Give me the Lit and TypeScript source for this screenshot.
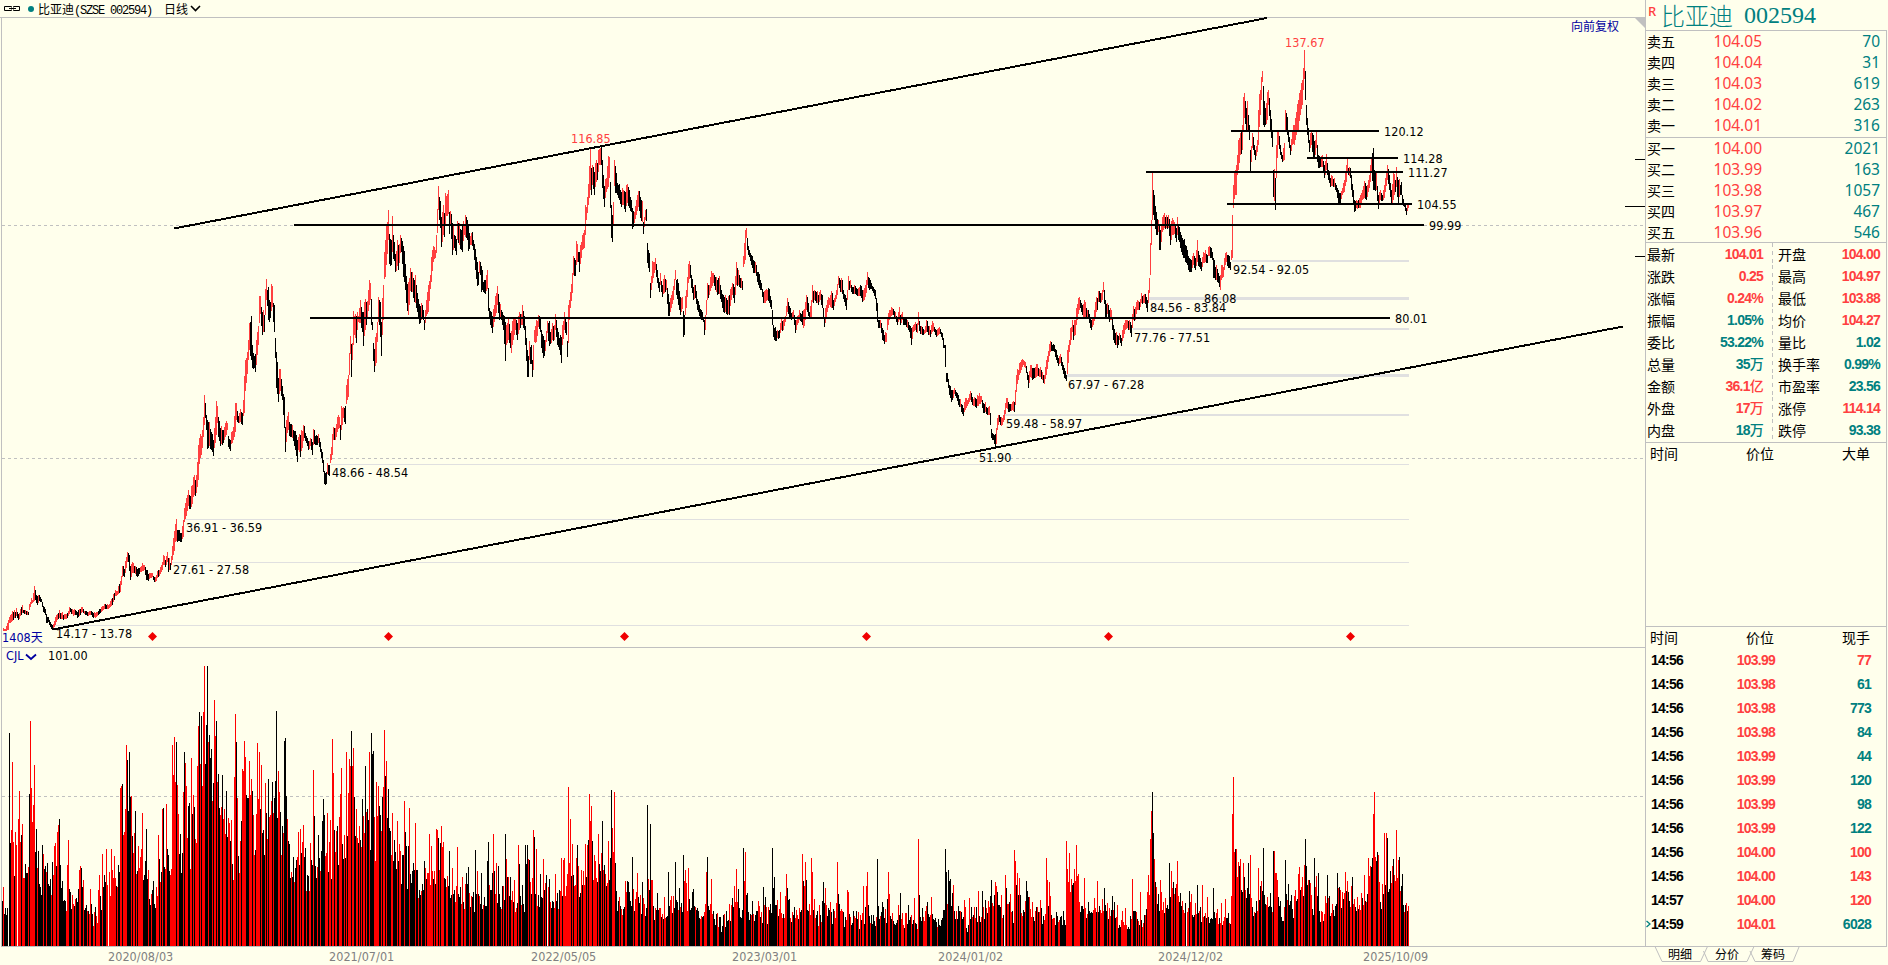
import { LitElement, html, css, svg } from 'lit'
import { customElement, property } from 'lit/decorators.js'

// x, high, low of the price bars (pixels); bars in between are interpolated
const PRICE = `
3 628 631 5 629 631 8 620 630 9 617 623 12 611 621 15 612 618 16 608 616 18 614 620 20 609 616 22 605 613 23 610 613 26 611 615
28 612 615 29 604 610 31 598 604 32 600 603 34 586 601 35 590 600 37 596 605 39 595 601 41 599 602 43 606 612 45 609 615 46 614 623
48 617 622 50 622 627 52 625 630 53 624 629 55 617 625 57 614 620 59 610 618 61 613 619 65 614 619 67 613 618 69 607 614 70 608 612
73 610 616 76 611 615 77 612 618 80 609 615 82 607 612 85 611 615 88 612 616 91 611 615 93 613 618 96 612 617 99 609 614 102 606 611
104 604 609 106 605 609 109 604 608 111 599 606 113 594 602 115 590 596 117 591 595 118 586 594 120 581 592 121 576 585 122 566 577
124 569 577 125 561 573 127 552 562 128 553 562 129 555 571 130 566 580 132 562 573 134 566 573 136 567 576 138 568 576 140 567 572
142 563 571 144 565 570 146 570 580 148 574 581 150 573 578 152 573 577 154 577 582 156 575 581 158 570 577 160 567 574 162 562 570
163 555 565 165 560 567 167 552 562 168 558 572 170 563 570 171 556 565 172 546 560 174 531 551 175 524 542 176 519 541 177 530 542
179 530 541 181 533 542 183 520 537 184 508 522 186 498 516 188 490 506 190 496 509 191 486 507 193 477 497 195 480 496 196 475 493
198 445 480 199 438 464 201 436 455 203 417 437 204 395 425 205 403 418 206 415 430 207 420 449 209 422 446 211 432 450 213 440 456
214 428 448 216 401 435 217 406 423 218 417 437 220 428 446 222 430 445 224 427 440 226 421 435 227 423 430 228 436 447 230 440 451
231 432 444 233 427 440 235 403 432 236 403 420 238 416 423 240 409 422 242 413 425 243 400 416 244 376 413 245 360 391 247 352 374
248 340 360 249 323 350 251 316 360 252 345 368 254 356 368 255 354 372 256 340 365 258 326 345 259 296 323 260 296 314 262 312 335
264 315 332 265 289 315 266 279 300 267 290 306 268 287 320 270 302 318 271 284 311 272 286 307 273 303 322 274 305 332 275 338 358
276 352 388 278 378 402 280 369 391 282 386 400 283 394 415 284 397 428 285 427 452 287 416 433 288 412 430 289 422 436 291 424 437
293 430 441 295 431 450 297 440 462 298 437 450 300 435 457 302 431 448 304 426 438 306 436 443 308 441 450 310 438 446 312 442 455
313 429 445 315 436 445 317 436 445 318 434 443 320 442 452 322 452 463 323 460 472 324 471 484 326 472 484 327 463 474 329 465 476
330 454 463 331 447 460 332 434 455 333 427 440 335 428 440 337 417 432 339 417 428 340 425 440 341 406 430 343 407 418 345 406 424
346 385 404 348 375 397 349 353 375 350 336 354 351 344 377 352 343 360 353 311 345 354 316 335 356 316 343 357 312 330 358 316 322
360 300 323 362 312 332 363 312 346 365 299 330 367 301 318 369 280 305 370 283 300 371 299 325 372 322 330 373 343 361 374 349 372
376 333 363 377 322 342 378 297 322 379 300 325 380 302 337 381 322 356 383 285 320 384 252 279 385 240 277 386 226 265 388 210 240
389 234 264 391 240 265 392 216 252 394 242 261 395 254 272 397 240 266 398 245 270 400 235 253 401 238 252 403 246 277 405 264 290
406 276 303 408 282 315 410 268 291 412 272 292 414 280 302 415 275 303 417 293 312 419 304 324 421 303 320 423 310 320 424 320 330
426 300 316 428 285 312 430 275 289 431 257 282 433 246 262 435 250 258 436 235 253 437 209 233 438 186 210 439 197 220 440 201 228
441 217 247 443 205 235 444 213 237 445 193 226 446 196 216 448 190 214 449 212 234 450 211 225 452 223 255 454 235 248 456 239 255
457 221 240 459 223 245 461 230 250 462 226 252 464 224 235 465 215 237 467 220 240 468 225 251 470 236 245 472 232 246 473 240 250
475 249 270 477 262 286 478 272 285 479 261 273 480 262 275 481 266 292 483 282 292 485 280 294 487 270 289 488 288 311 489 308 318
490 311 325 492 316 333 494 305 322 496 293 313 497 286 305 499 302 320 501 310 320 503 315 330 505 322 361 506 325 345 508 318 340
510 333 348 511 331 353 513 318 340 515 319 330 517 323 340 519 312 330 521 314 325 522 305 325 524 316 330 525 326 345 527 350 377
528 356 377 529 341 360 531 345 364 532 360 377 533 345 370 534 330 342 536 320 342 538 315 327 540 318 332 541 330 348 543 336 358
545 340 351 547 321 333 549 321 346 550 332 344 552 323 340 554 325 340 555 314 330 557 328 345 559 338 350 561 337 363 562 325 345
564 312 330 566 322 335 567 341 357 568 305 343 569 300 320 570 292 308 572 273 293 573 256 275 575 260 276 576 241 265 578 252 262
579 252 272 581 242 258 582 235 250 584 230 248 585 205 235 586 207 220 588 184 205 590 147 190 591 168 195 592 165 185 594 172 195
595 163 187 597 163 180 598 150 172 599 149 165 601 146 165 602 160 188 604 186 207 606 178 192 608 156 187 609 157 178 610 182 208
611 205 238 612 215 242 613 202 225 614 160 186 615 166 193 617 183 195 619 184 200 621 192 207 623 190 205 625 192 212 627 184 203
629 190 208 631 200 212 632 208 229 634 212 223 636 200 215 638 191 207 640 197 218 642 201 222 643 222 234 645 210 220 646 209 221
647 243 263 649 253 272 650 283 298 651 276 290 652 261 283 654 262 273 655 258 270 657 270 283 659 282 292 660 273 285 662 285 297
664 275 293 666 280 290 668 294 316 669 302 316 671 295 308 673 286 300 675 270 280 676 280 295 678 283 305 680 297 315 682 297 309
683 311 337 684 315 335 685 296 315 687 277 297 688 264 283 690 265 278 691 275 288 693 287 300 695 285 298 697 299 310 699 305 316
701 310 320 703 318 322 704 320 335 705 315 330 706 300 315 707 283 300 709 285 295 711 271 288 713 273 283 715 277 290 717 280 295
719 276 294 721 290 302 723 295 312 725 295 312 727 300 315 729 295 315 731 287 300 732 283 295 734 287 303 736 262 285 738 270 285
740 278 288 742 281 290 743 256 267 745 230 260 746 228 238 747 238 250 749 250 257 751 255 265 753 260 273 755 262 273 757 272 282
759 274 288 761 283 290 763 292 303 765 290 303 767 290 300 769 289 303 771 300 309 772 310 325 773 325 337 775 327 341 777 330 338
779 330 338 781 319 330 783 320 330 785 316 322 787 298 312 789 306 317 791 313 320 793 310 318 795 320 333 797 316 325 799 310 320
801 314 322 803 310 328 805 302 320 806 295 310 808 303 316 809 312 317 811 300 317 812 285 302 814 290 300 816 292 303 818 295 305
820 290 300 822 295 308 824 317 327 825 308 323 827 300 312 829 298 305 831 291 308 833 300 310 835 295 302 837 284 295 838 276 285
840 280 292 842 280 294 844 294 302 846 298 310 847 290 300 848 276 290 850 280 288 852 287 294 854 285 294 856 288 295 858 288 296
860 285 296 862 290 302 864 288 300 866 280 293 867 272 285 869 278 290 871 283 289 873 287 293 875 290 299 877 303 322 878 320 328
880 320 328 882 328 340 884 335 344 886 333 342 887 318 330 889 310 320 891 307 316 893 309 315 895 312 318 897 317 325 899 307 320
900 315 325 902 312 320 903 318 325 905 318 325 907 320 328 909 325 332 911 328 345 913 325 332 915 322 330 917 323 333 918 312 325
920 326 334 922 327 335 924 330 334 926 320 332 928 326 335 930 330 337 932 321 332 934 327 332 936 330 337 938 328 335 940 329 334
942 333 340 943 338 348 944 345 348 945 345 367 946 373 382 947 373 382 949 385 395 951 390 402 953 390 398 954 388 394 956 392 398
958 395 405 960 399 407 961 404 412 963 408 416 965 398 410 967 400 406 970 391 400 972 397 405 974 397 406 976 399 408 979 393 404
981 396 402 983 403 413 985 402 412 987 408 415 989 406 415 990 413 425 991 429 438 993 434 440 995 434 447 996 428 444 997 418 430
999 415 422 1001 417 426 1003 415 422 1004 410 420 1006 398 408 1008 402 412 1010 404 411 1012 402 410 1014 402 412 1015 390 405
1016 375 392 1018 370 380 1019 363 375 1021 360 370 1023 360 365 1025 362 368 1027 372 380 1028 375 388 1030 365 377 1032 368 380
1034 368 378 1036 364 377 1038 368 376 1040 367 377 1042 372 380 1044 375 384 1046 360 375 1048 351 362 1050 341 352 1052 345 351
1054 345 352 1056 350 360 1058 358 366 1060 354 363 1062 362 370 1064 368 378 1066 375 381 1067 350 374 1069 340 352 1070 328 345
1072 320 332 1073 325 340 1075 320 335 1076 308 325 1078 298 314 1080 300 308 1082 305 315 1084 300 318 1086 308 318 1088 310 318
1090 318 328 1091 320 330 1093 318 325 1095 302 317 1097 298 310 1098 291 302 1100 293 303 1102 290 300 1103 282 292 1105 300 317
1107 303 314 1109 310 322 1111 310 320 1113 325 340 1115 333 345 1117 335 348 1119 333 340 1121 338 346 1123 325 338 1125 320 330
1127 320 328 1129 320 330 1131 325 337 1133 306 320 1135 307 320 1137 300 310 1139 302 310 1141 293 303 1143 295 303 1145 294 304
1147 300 312 1149 278 293 1150 243 275 1151 220 245 1152 172 220 1153 190 215 1154 195 220 1156 212 235 1158 220 232 1159 225 250
1160 230 250 1162 217 232 1164 213 228 1166 215 228 1168 215 228 1170 225 245 1172 218 235 1174 222 234 1176 228 242 1177 217 235
1179 227 242 1181 235 252 1183 240 258 1185 245 262 1187 250 265 1189 258 272 1191 260 272 1193 253 265 1195 258 270 1197 240 262
1199 255 267 1201 262 271 1203 252 263 1205 250 262 1207 255 263 1208 247 256 1210 247 258 1212 252 260 1213 258 278 1215 267 280
1216 265 280 1218 273 283 1220 275 290 1221 265 280 1223 267 277 1224 258 270 1226 252 262 1228 255 268 1230 262 270 1231 250 260
1232 215 258 1233 185 208 1235 170 195 1236 165 195 1237 155 175 1238 140 170 1239 138 163 1240 133 155 1242 125 150 1243 97 130
1244 93 118 1246 108 130 1247 101 130 1248 115 130 1249 125 140 1250 150 172 1252 133 148 1254 145 155 1255 150 160 1257 140 152
1258 110 145 1260 90 115 1261 77 100 1262 71 82 1263 86 125 1265 108 125 1267 92 120 1268 90 105 1270 110 130 1272 130 147
1273 170 197 1275 178 210 1276 145 178 1278 132 145 1280 145 155 1282 155 162 1284 143 160 1285 110 130 1287 117 135 1288 130 142
1290 145 155 1292 130 145 1294 125 145 1296 112 135 1298 100 130 1300 90 115 1302 80 105 1303 68 90 1304 50 79 1305 71 100
1306 105 125 1307 118 135 1309 140 152 1311 130 145 1313 135 158 1315 140 155 1316 130 148 1317 145 162 1318 155 168 1320 157 167
1322 155 167 1324 165 178 1326 154 170 1328 170 180 1330 178 187 1332 176 186 1334 178 187 1336 185 192 1338 190 203 1340 193 203
1342 188 195 1344 180 192 1346 165 182 1347 158 172 1348 168 175 1350 168 178 1351 175 190 1353 190 203 1354 200 212 1356 200 208
1358 200 208 1360 195 208 1362 190 200 1364 181 198 1366 186 200 1368 180 192 1370 165 182 1371 159 172 1373 148 190 1374 170 190
1376 172 190 1378 195 209 1380 190 200 1382 195 201 1384 185 198 1385 178 192 1387 165 180 1389 175 190 1391 190 204 1393 172 200
1395 180 192 1396 167 187 1398 180 203 1400 185 195 1401 182 195 1402 195 205 1404 203 207 1406 208 215 1408 203 208`

// first x of the row, then one colour letter and height per bar
const VOLUME: [number, string][] = [
  [2, 'k45r59k32k38k31k38k0k213k103r116r184r104k70r114r101k0r127r155r104k111r122r68r68k82k73k73r79k152r225r158r124r141r181k94k117r78k95k62k59k51k101r92k77k80r74k83k62k60'],
  [50, 'k67r51k84r71r100r103k80r114r121k127k81k58k65k45k46k45r35r81r106k57k54k37r51r42k40r47k48k44k57r76r80k78k59r66k36k38k41r35k35r32r57k42k32r20r34k39r30r23r56r71'],
  [100, 'k50k36r92k59k71k64r97r61k0r74r50r97r76r68r90r68k60r59k81k74r158r160k162r111r114r137r201k186k135k194k149r150k110r93r113k135r72k75r100r78r89r97r133k66k71k85k117k67r76k47'],
  [150, 'k41r52k56k65k42k38r59r50r111k87r64k74r137k138k79r77r142k97k91k75r71r77r201r171r209r164k204r161r132k92k112k73k93r154k194r183r160r108k140k143r77r188k132r151k139r107r103r180r220k234'],
  [200, 'r182k230r160r234r280k182k221k280r204k211k188k197r145k163r246r210k225r164k172k138r131r139k171r127r137r112k155k109r128r123k105r126k82r66r169r232k204r148k90r73r105k125r177r175r205r189k151k148k148r185'],
  [250, 'r151r167k155r131r91k96r132r203r147r194k137r181k113k116k91r163k133r107k167r129r131r145k164r133k148k165k235k128r175r154k134r91k120r113k205k208k150r127k105k102k68r74k69k89r64k78k86r89r114k81'],
  [300, 'r117k93r104r121k89k98r55k71k70r55r103k86k81r176k130k80k68r79k111k88r75k95k125k147k131r90r93r133k74r104r126k67r207r173k116r94r115k120k81r129r152r178k102k87r111k88r194k110r153r187'],
  [350, 'r180k215r180r198k149k110r137r108k103r120k106r99k147r130r113k180r134k137k126r194k96k213k192k195r129r85r164r130r160k140k131r115k149r159r216k170r185k128k157k118k115r91r133k85k106k94k77r125k85r102'],
  [400, 'r95k62k91k91r145k114k100k57k100r138k72k63k75k83k76r123k76k76r48k56k51r55k62k56k85r78k67r73r73r112r61r100r75k67r75k62r117r116k108r76k103r120r99r104k68k67r59r70k60k95'],
  [450, 'k48k51r78k52k56r44r60r99k52k49k59r42r69k44r37r62k73k62k79r53k39r50k49k54k34k96k52r75k52r50k42k73k37r41k49k40k40k85k104r61k56k56k73r112k75r52r83k43k80k52'],
  [500, 'k39r37k60r60k46k112r87k69r69k50k69r46r55k44r66r34r38k43r101k82k50r41k61k42k34k101k82k101r87k86r64k52r68r116k109k52r97r40k51k39k72k49k48r87k56r63k71k0r59k67'],
  [550, 'r44k38k45k44r38r72k45k53r37k56r55r88k50r86r88r50r60r72r159r83r127k70r102k71r60r61r88k101r80k49k53r76k61r75r61r102k69r101k106r152r125r140k105r66r91r85r68k64r112k82'],
  [600, 'k75r93k125r76k81r72k60r63r105k66k88k156r118r94r154k83k55k35k45r49k40r37r31k37k39r65r54k65k64k54k45k40k89r57k35r47r54r73k49k43r51k32k64r48r42k30k38k141r67k56'],
  [650, 'k122r66r66k40k26r38k36k53k36r38r38k29r32k27r49r28k29k30k74k40r46r50k33r50k38k84k46k44r36k58r39k43k34k91r65r76r63r35r78k47k36k38k54k57k40r39k36k38k35k28'],
  [700, 'r27r30k29k30r34r42r74k89k40k36r42r67r32k35k27k21k32r33r19k29k29k14k20k31r32k19k35k25k26r42k25r41k48k39r60r44r77r44k57k38k29k28k36k98r65r94k51k53k34k26'],
  [750, 'k32r31k45r32k25k31k35k35r45r40k29r34k23k59r41k49r39k22r39k36k42k33k98k58k69k41k41r46k30r37r54r33r28k32r28r50r72k58k46k47r28k24r34k31k39r28r36r31k27r38'],
  [800, 'k34k36r92k65r60r84k66k36k35r42r31r88r74k36r47r28k31k35r20r41k31r24k45k64k43r58r41k30k38k36r44k34k22k37r35r28r43r84k52k42r35r37r35k34k19k29r26r56r54k32'],
  [850, 'r29k21k23k35r30r28k35k27r34k17r31k26r33r60k22k39r60r74k41k30r23k31k22k31k25k20r29k87k40k27r30k34k44k39k28r37k23k47r74r52k30k27r33k25k22k21k23k26r41k31'],
  [900, 'k53r27r33r21k18r33r33k22k41k26k29r31k22k26r48k23k22r17r107k51k29k25k38r29r25r35r40k44k32k29r31r49k32k27k26k28k24r19k27k21k20k26k28k36k36k97k74r42k76k65'],
  [950, 'k67k40k53r61k35k27r35k27k40k35r35k34k27k29r46r39k18k14k21r48k27k39r29k31r39r28k39k24r55k30k24r29k55r39k27k46r38k33r45r39k50k66r43r40k51r64r60k54k41k41'],
  [1000, 'k39r51r28k31k0r71k58r42r42k44r52r34k35k23r96r85k61r73k51r68k51r33r30k36k34r45k65k55k49r49r37r29r44k29k25r35k39r39k34r34r46k38k22k30r26r32r88r66k40r64'],
  [1050, 'r50k31r27r28r28k21k34k30r24r26k29k30k21k35k26k21r105r77r64r93r54r67k61k63r77r65r101r70r72r44k34k40k40k37r68r38k28r32k44k35k33k34k33r36r48r38k34r65k34k40'],
  [1100, 'r36r33r47r35k58k41k35r43k27r38r30k36k50r36k44k28r29r41k18k21k19r26r35r24r21r38r21k17k19k17k30r27r67k35k35k35r34k27r25k21r54k26r19r23k31r31k37r54r71r51'],
  [1150, 'r107r135k154k113r87k64r59k42k52k35r66r54r36r44k33r48k38k41k37k83k49r75r58k64r52k58r62r85r50k44k53k40r45r36r33k43k0r34r38k55r44r52k31k29k31r43r32k61k33r35'],
  [1200, 'k39k24r61r29k30r33k28r49k29k23k27k28k27k58k34k28r33r37r22k28r23r43k21r25r29r47k28k28k33r23k22r50r132r169r94k97r97r69r84k80r87k56k54r83k69r56k48k58k83k52'],
  [1250, 'r91r48k39k30r34k33k45r35r78k46k60r65k55k98k51k42r41r49k39k40k53k39r34k95r95r73r73r66k49k40k45k29k25k25r39k86k52r46k62k41k45k51k37k28r50r56k45k47r72r79'],
  [1300, 'k56r59r69k50r81k107k80k61r66k66r63r51k37k31k88r59r70k50k73k35k24r35r34k25r32r50r43k71r48k50k30r33r42k36k30k40k42k73r58k59r56k38r54k47r53r74k55r65k54k45'],
  [1350, 'r39r60k69r42r47k39k35r49k37r41r36r53k48r41r71k45r44k52r88r70r80k79k88r132r154r89k85k94r91r64k44k37r62k52r113k61r113k108k54k57k75r63r80k87r71r65r116r68r86k89r55k60k72k41r34k41r43k35r40'],
]

// left x, centre y, thickness
const GAPS = [
  [54, 625.5, 1], [172, 562.5, 1], [185, 519.5, 1], [331, 464.5, 1], [1004, 415, 2],
  [1067, 375.5, 3], [1133, 329, 2], [1149, 298.5, 3], [1232, 261, 2],
]

// x1, x2, y
const LEVELS = [
  [294, 1424, 225], [310, 1390, 318], [1227, 1412, 204],
  [1146, 1403, 172], [1307, 1398, 158], [1231, 1379, 131],
]

const LABELS: [number, number, string][] = [
  [1384, 136, '120.12'], [1403, 163, '114.28'], [1408, 177, '111.27'], [1417, 209, '104.55'],
  [1429, 230, '99.99'], [1395, 323, '80.01'], [1233, 274, '92.54 - 92.05'], [1204, 303, '86.08'],
  [1150, 312, '84.56 - 83.84'], [1134, 342, '77.76 - 77.51'], [1068, 389, '67.97 - 67.28'],
  [1006, 428, '59.48 - 58.97'], [979, 462, '51.90'], [332, 477, '48.66 - 48.54'],
  [186, 532, '36.91 - 36.59'], [173, 574, '27.61 - 27.58'], [56, 638, '14.17 - 13.78'],
]

const DATES: [number, string][] = [
  [108, '2020/08/03'], [329, '2021/07/01'], [531, '2022/05/05'], [732, '2023/03/01'],
  [938, '2024/01/02'], [1158, '2024/12/02'], [1363, '2025/10/09'],
]

const DIAMONDS = [152.5, 388.5, 624.5, 866.5, 1108.5, 1350.5]

function pricePaths() {
  const n = PRICE.trim().split(/\s+/).map(Number)
  const out = { r: '', k: '' }
  let seed = 7
  const rand = () => {
    seed = (seed * 16807) % 2147483647
    return seed / 2147483647 - 0.5
  }
  let prev = n[1] + n[2]
  for (let i = 0; i < n.length; i += 3) {
    const [x, hi, lo, nx, nhi, nlo] = n.slice(i, i + 6)
    const end = nx ?? x + 1
    for (let bx = x; bx < end; bx++) {
      let top = hi
      let bottom = lo
      if (bx > x) {
        const t = (bx - x) / (end - x)
        const jitter = rand() * (lo - hi) * 0.4
        top = Math.round(hi + (nhi - hi) * t + jitter)
        bottom = Math.round(lo + (nlo - lo) * t + jitter * 0.5)
      }
      const mid = top + bottom
      const colour = mid + rand() * 8 < prev ? 'r' : 'k'
      out[colour] += `M${bx + 0.5} ${top}V${Math.max(bottom, top + 2)}`
      prev = mid
    }
  }
  return out
}

function volumePaths() {
  const out: Record<string, string> = { r: '', k: '' }
  for (const [start, row] of VOLUME) {
    let x = start
    for (const [, colour, height] of row.matchAll(/([rk])(\d+)/g)) {
      if (+height) out[colour] += `M${x + 0.5} 946V${946 - +height}`
      x++
    }
  }
  return out
}

@customElement('stock-chart')
export class StockChart extends LitElement {
  private price = pricePaths()
  private volume = volumePaths()

  render() {
    return html`
      <svg width="1646" height="948" viewBox="0 17 1646 948">
        <g shape-rendering="crispEdges" fill="none">
          <path class="rule" d="M0 17.5H1645M1.5 17V946M1 647.5H1645M1 946.5H1645M1645.5 0V947" />
          <path class="dash" d="M2 225.5H1645M2 458.5H1645M2 796.5H1645" />
          ${GAPS.map(([x, y, w]) => svg`<path class="gap" stroke-width=${w} d="M${x} ${y}H1409" />`)}
          <path class="up" d=${this.price.r} />
          <path class="bar" d=${this.price.k} />
          <path class="volume-up" d=${this.volume.r} />
          <path class="bar" d=${this.volume.k} />
          <path class="bar" d="M1635 159.5H1645M1625 206.5H1645M1635 256.5H1645" />
          ${LEVELS.map(([x1, x2, y]) => svg`<path class="level" d="M${x1} ${y}H${x2}" />`)}
          <path class="level" d="M174 228.5L1267 18M53 629.5L1623 326.5" />
        </g>
        <path fill="#c0c0c0" d="M1635 18H1645V28Z" />
        ${DIAMONDS.map(x => svg`<path fill="#f00000" d="M${x} 632L${x + 4.5} 636.5L${x} 641L${x - 4.5} 636.5Z" />`)}
        ${LABELS.map(([x, y, text]) => svg`<text x=${x} y=${y}>${text}</text>`)}
        <text class="peak" x="571" y="143">116.85</text>
        <text class="peak" x="1285" y="47">137.67</text>
        <text class="blue" x="2" y="642">1408<tspan class="cjk">天</tspan></text>
        <text class="blue" x="6" y="660">CJL</text>
        <path fill="none" stroke="#0000a0" stroke-width="1.8" d="M26 654.500L31 659L36 654.500" />
        <text x="48" y="660">101.00</text>
        <text class="blue cjk" x="1571" y="30.500">向前复权</text>
        ${DATES.map(([x, text]) => svg`<text class="date" x=${x} y="961">${text}</text>`)}
      </svg>
    `
  }

  static styles = css`
    :host {
      display: block;
    }

    svg {
      display: block;
    }

    .rule {
      stroke: #c0c0c0;
    }

    .dash {
      stroke: #c0c0c0;
      stroke-dasharray: 3 3;
    }

    .gap {
      stroke: #e0e0e0;
    }

    .up {
      stroke: #ff4040;
    }

    .bar {
      stroke: #000;
    }

    .volume-up {
      stroke: #f00;
    }

    .level {
      stroke: #000;
      stroke-width: 2;
    }

    text {
      font-family: 'DejaVu Sans Condensed', 'DejaVu Sans', 'Noto Sans CJK SC', sans-serif;
      font-size: 12.5px;
      font-stretch: condensed;
      letter-spacing: 0.05px;
    }

    .peak {
      fill: #ff4040;
    }

    .blue {
      fill: #0000a0;
    }

    .cjk {
      font-family: 'Noto Sans CJK SC', sans-serif;
      font-size: 12px;
      letter-spacing: 0;
    }

    .date {
      fill: #808080;
    }
  `
}

type Tone = 'up' | 'down'

const ORDERS: [string, string, string][][] = [
  [
    ['卖五', '104.05', '70'],
    ['卖四', '104.04', '31'],
    ['卖三', '104.03', '619'],
    ['卖二', '104.02', '263'],
    ['卖一', '104.01', '316'],
  ],
  [
    ['买一', '104.00', '2021'],
    ['买二', '103.99', '163'],
    ['买三', '103.98', '1057'],
    ['买四', '103.97', '467'],
    ['买五', '103.96', '546'],
  ],
]

const STATS: [string, string, string, Tone, string, string, Tone][] = [
  ['最新', '104.01', '', 'up', '开盘', '104.00', 'up'],
  ['涨跌', '0.25', '', 'up', '最高', '104.97', 'up'],
  ['涨幅', '0.24%', '', 'up', '最低', '103.88', 'up'],
  ['振幅', '1.05%', '', 'down', '均价', '104.27', 'up'],
  ['委比', '53.22%', '', 'down', '量比', '1.02', 'down'],
  ['总量', '35', '万', 'down', '换手率', '0.99%', 'down'],
  ['金额', '36.1', '亿', 'up', '市盈率', '23.56', 'down'],
  ['外盘', '17', '万', 'up', '涨停', '114.14', 'up'],
  ['内盘', '18', '万', 'down', '跌停', '93.38', 'down'],
]

const TICKS: [string, string, string, Tone][] = [
  ['14:56', '103.99', '77', 'up'],
  ['14:56', '103.98', '61', 'down'],
  ['14:56', '103.98', '773', 'down'],
  ['14:56', '103.98', '84', 'down'],
  ['14:56', '103.99', '44', 'down'],
  ['14:56', '103.99', '120', 'down'],
  ['14:56', '103.99', '98', 'down'],
  ['14:56', '103.99', '122', 'down'],
  ['14:56', '104.00', '100', 'up'],
  ['14:56', '104.00', '143', 'up'],
  ['14:57', '104.00', '120', 'up'],
  ['14:59', '104.01', '6028', 'down'],
]

@customElement('quote-panel')
export class QuotePanel extends LitElement {
  @property({ type: String }) name = ''
  @property({ type: String }) code = ''

  render() {
    return html`
      <header>
        <sup>R</sup><span class="name">${this.name}</span><span class="code">${this.code}</span>
      </header>
      ${ORDERS.map(side => html`
        <section class="orders">
          ${side.map(([label, price, count]) => html`
            <div class="order">
              <span>${label}</span><span class="num up">${price}</span><span class="num down">${count}</span>
            </div>
          `)}
        </section>
      `)}
      <section class="stats">
        ${STATS.map(([l1, v1, unit, t1, l2, v2, t2]) => html`
          <div class="stat left"><span>${l1}</span><span class="bold ${t1}">${v1}<i>${unit}</i></span></div>
          <div class="stat"><span>${l2}</span><span class="bold ${t2}">${v2}</span></div>
        `)}
      </section>
      <section class="big">
        <div class="tick head"><span>时间</span><span>价位</span><span>大单</span></div>
      </section>
      <section class="ticks">
        <div class="tick head"><span>时间</span><span>价位</span><span>现手</span></div>
        ${TICKS.map(([time, price, count, tone], i) => html`
          <div class="tick bold">
            <span>${i === TICKS.length - 1 ? html`<svg class="mark" width="5" height="8"><path d="M0.500 1L4 4L0.500 7" /></svg>` : ''}${time}</span>
            <span class="up">${price}</span>
            <span class=${tone}>${count}</span>
          </div>
        `)}
      </section>
      <svg class="tabs" width="242" height="18" viewBox="1646 946 242 18">
        <path d="M1655 946.5L1662 961.5H1700.500L1707.500 946.5M1703.500 951L1708 961.5H1747L1754 946.5M1750 951L1755 961.5H1793L1799 947" />
        <text x="1668" y="959">明细</text>
        <text x="1715" y="959">分价</text>
        <text x="1761" y="959">筹码</text>
      </svg>
    `
  }

  static styles = css`
    :host {
      display: flex;
      flex-direction: column;
      font: 14px 'Noto Sans CJK SC', sans-serif;
      color: #000;
    }

    header {
      height: 30px;
      display: flex;
      align-items: center;
      padding-left: 2px;
      color: #008080;
      font-size: 24px;
      font-weight: 300;
      line-height: 30px;
    }

    sup {
      color: #ff4040;
      font: 500 13px/14px 'Noto Sans', sans-serif;
      align-self: flex-start;
      padding-top: 4px;
      width: 13px;
    }

    .code {
      font-family: 'Liberation Serif', serif;
      margin-left: 11px;
    }

    section {
      box-sizing: border-box;
      width: 241px;
      border-top: 1px solid #c0c0c0;
      border-right: 1px solid #c0c0c0;
    }

    .orders {
      height: 107px;
    }

    .orders + .orders {
      height: 105px;
    }

    .order {
      display: grid;
      grid-template-columns: 45px 70px 1fr;
      height: 21px;
      line-height: 21px;
      padding: 0 6px 0 1px;
    }

    .num {
      font-family: 'Noto Sans', sans-serif;
      font-size: 15.500px;
      text-align: right;
    }

    .up {
      color: #ff4040;
    }

    .down {
      color: #008080;
    }

    .stats {
      display: grid;
      grid-template-columns: 127px 1fr;
      grid-auto-rows: 22px;
      height: 200px;
    }

    .stat {
      display: flex;
      justify-content: space-between;
      line-height: 22px;
      padding: 0 6px 0 5px;
    }

    .left {
      padding: 0 10px 0 1px;
      background: repeating-linear-gradient(#c0c0c0 0 4px, transparent 4px 8px) right / 1px 100% no-repeat;
    }

    .bold {
      font-family: 'Liberation Sans', sans-serif;
      font-size: 14px;
      font-weight: 700;
      letter-spacing: -0.75px;
    }

    i {
      font: 500 14px/1 'Noto Sans CJK SC', sans-serif;
    }

    .big {
      height: 184px;
    }

    .ticks {
      height: 321px;
      border-bottom: 1px solid #c0c0c0;
    }

    .tick {
      display: grid;
      grid-template-columns: 60px 64px 1fr;
      height: 24px;
      line-height: 24px;
      padding: 0 15px 0 5px;
    }

    .head {
      height: 21px;
      line-height: 21px;
      padding: 0 16px 0 4px;
    }

    .tick span + span {
      text-align: right;
    }

    .tick span {
      position: relative;
    }

    .mark {
      position: absolute;
      left: -5px;
      top: 8px;
      fill: none;
      stroke: #008080;
      stroke-width: 1.3;
    }

    .tabs {
      display: block;
      margin-top: -1px;
      font-size: 12px;
    }

    .tabs path {
      fill: none;
      stroke: #c0c0c0;
    }
  `
}

@customElement('app-root')
export class AppRoot extends LitElement {
  render() {
    return html`
      <main>
        <div class="bar">
          <svg width="18" height="7" fill="none" stroke="#000">
            <path d="M7.500 2.500V1.500H0.500V5.500H7.500V4.500M5 3.500H12M9.500 2.500V1.500H15.500V5.500H9.500V4.500" />
          </svg>
          <i></i>
          <span>比亚迪<b>(SZSE 002594)</b></span>
          <span class="period">日线</span>
          <svg width="11" height="7" fill="none" stroke="#000" stroke-width="1.6">
            <path d="M1 1L5.500 5.500L10 1" />
          </svg>
        </div>
        <stock-chart></stock-chart>
      </main>
      <quote-panel name="比亚迪" code="002594"></quote-panel>
    `
  }

  static styles = css`
    :host {
      display: grid;
      grid-template-columns: 1646px 242px;
      height: 965px;
      overflow: hidden;
      background: #ffffec;
    }

    .bar {
      box-sizing: border-box;
      height: 17px;
      display: flex;
      align-items: center;
      padding-left: 4px;
      border-right: 1px solid #c0c0c0;
      font: 12px/16px 'Noto Sans CJK SC', sans-serif;
    }

    i {
      width: 6px;
      height: 6px;
      margin: 0 4px 0 6px;
      border-radius: 50%;
      background: #008080;
    }

    b {
      font: 12px/1 'Liberation Mono', monospace;
      letter-spacing: -1.2px;
    }

    .period {
      margin: 0 2px 0 12px;
    }
  `
}
